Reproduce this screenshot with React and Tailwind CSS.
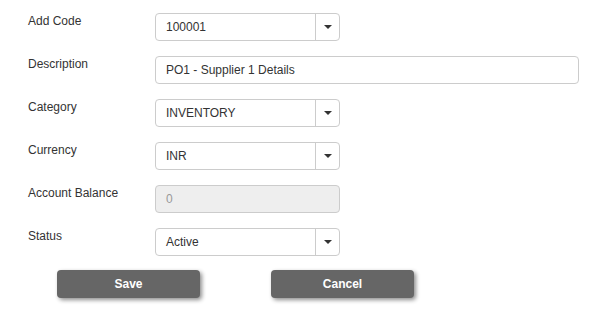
import React from 'react';

const font = { fontFamily: '"Liberation Sans", Arial, sans-serif' };

function Caret() {
    return (
        <div className="w-6 h-full border-l border-[#ccc] flex items-center justify-center">
            <svg width="8" height="4" viewBox="0 0 8 4"><path d="M0 0h8L4 4z" fill="#333" /></svg>
        </div>
    );
}

function SelectBox({ value }) {
    return (
        <div className="w-[185px] h-[28px] border border-[#ccc] rounded-[4px] bg-white flex items-center">
            <div className="flex-1 pl-[10px] text-[12px] text-[#333]">{value}</div>
            <Caret />
        </div>
    );
}

function Row({ label, children }) {
    return (
        <div className="flex items-start h-[43px]">
            <div className="w-[127px] text-[12px] leading-[16px] text-[#333]">{label}</div>
            {children}
        </div>
    );
}

export default function App() {
    return (
        <div className="w-[595px] h-[312px] bg-white pl-[28px] pt-[13px]" style={font}>
            <Row label="Add Code"><SelectBox value="100001" /></Row>
            <Row label="Description">
                <div className="w-[424px] h-[28px] border border-[#ccc] rounded-[4px] flex items-center pl-[10px] text-[12px] text-[#333]">
                    PO1 - Supplier 1 Details
                </div>
            </Row>
            <Row label="Category"><SelectBox value="INVENTORY" /></Row>
            <Row label="Currency"><SelectBox value="INR" /></Row>
            <Row label="Account Balance">
                <div className="w-[185px] h-[28px] border border-[#ccc] rounded-[4px] bg-[#eee] flex items-center pl-[10px] text-[12px] text-[#999]">
                    0
                </div>
            </Row>
            <Row label="Status"><SelectBox value="Active" /></Row>
            <div className="flex gap-[71px] pl-[29px] -mt-[1px]">
                <button className="w-[143px] h-[28px] bg-[#666] rounded-[4px] text-white text-[12px] font-bold shadow-[2px_2px_4px_rgba(0,0,0,0.45)]">Save</button>
                <button className="w-[143px] h-[28px] bg-[#666] rounded-[4px] text-white text-[12px] font-bold shadow-[2px_2px_4px_rgba(0,0,0,0.45)]">Cancel</button>
            </div>
        </div>
    );
}
